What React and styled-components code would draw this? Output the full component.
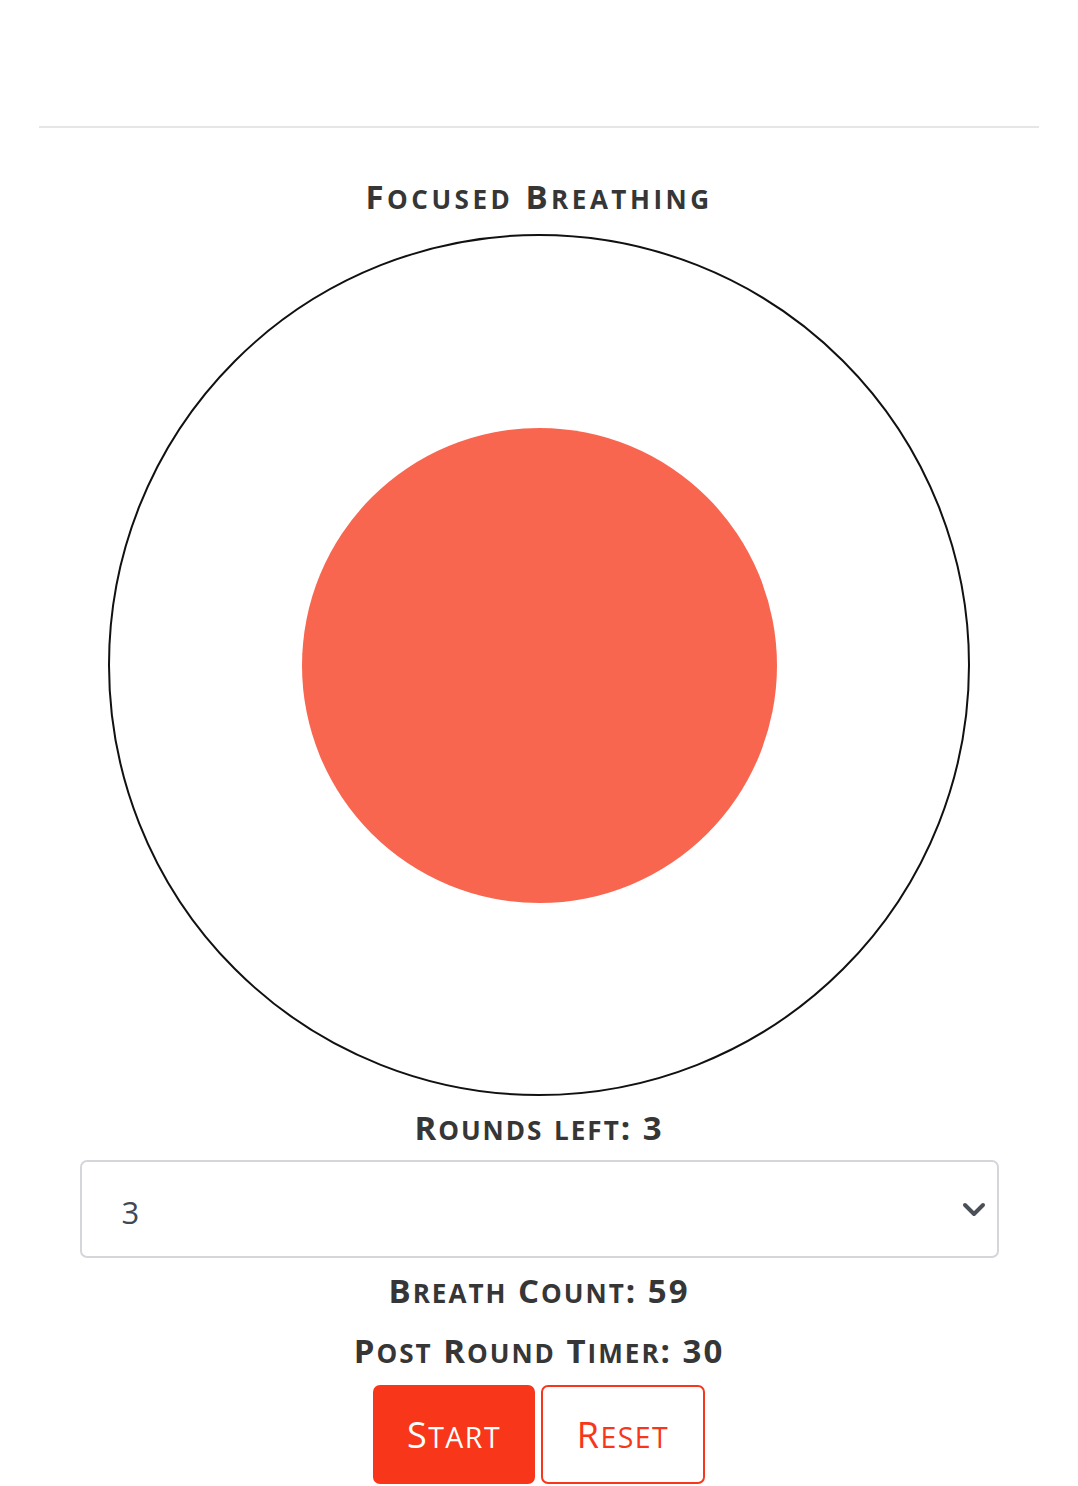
import React from 'react'
import styled, { createGlobalStyle } from 'styled-components'

const GlobalStyle = createGlobalStyle`
    html, body {
        margin: 0;
        padding: 0;
        background: #ffffff;
    }
    body {
        font-family: "Open Sans", sans-serif;
        color: #363636;
    }
`

const Page = styled.div`
    width: 1078px;
    display: flex;
    flex-direction: column;
    align-items: center;
    padding-top: 126px;
`

const Divider = styled.hr`
    width: 1000px;
    margin: 0;
    border: none;
    border-top: 2px solid #e6e6e6;
`

const Heading = styled.h2`
    margin: ${props => props.margin || '0'};
    font-family: "Open Sans", sans-serif;
    font-weight: 700;
    font-size: 33px;
    line-height: 40px;
    letter-spacing: ${props => props.spacing || '2px'};
    color: #363636;
    text-align: center;
`

// lowercase letters drawn as smaller capitals
const Small = styled.span`
    font-size: 0.79em;
    line-height: 1;
    text-transform: uppercase;
`

const smallCaps = (text) => {
    const parts = []
    let buf = ''
    let lower = false
    const flush = () => {
        if (!buf) return
        parts.push(lower ? <Small key={parts.length}>{buf}</Small> : buf)
        buf = ''
    }
    for (const ch of text) {
        const isLower = ch !== ch.toUpperCase()
        if (isLower !== lower) {
            flush()
            lower = isLower
        }
        buf += ch
    }
    flush()
    return parts
}

const OuterCircle = styled.div`
    width: 858px;
    height: 858px;
    border: 2px solid #111;
    border-radius: 50%;
    display: flex;
    align-items: center;
    justify-content: center;
`

const InnerCircle = styled.div`
    width: 475px;
    height: 475px;
    border-radius: 50%;
    background-color: #f96650;
`

const SelectWrap = styled.div`
    position: relative;
    width: 919px;
`

const SelectInput = styled.select`
    -webkit-appearance: none;
    -moz-appearance: none;
    appearance: none;
    display: block;
    width: 100%;
    height: 98px;
    border: 2px solid #d4d6db;
    border-radius: 7px;
    background-color: #fff;
    padding: 6px 0 0 40px;
    font-family: "Open Sans", sans-serif;
    font-size: 31px;
    color: #424852;
`

const Chevron = styled.svg`
    position: absolute;
    right: 13px;
    top: 42px;
    width: 24px;
    height: 15px;
    pointer-events: none;
`

const ButtonRow = styled.div`
    display: flex;
    gap: 6px;
    margin-top: 14px;
`

const Button = styled.button`
    box-sizing: border-box;
    width: ${props => props.primary ? '162px' : '164px'};
    height: 99px;
    border-radius: 7px;
    border: 2px solid #f8361a;
    background-color: ${props => props.primary ? '#f8361a' : '#ffffff'};
    color: ${props => props.primary ? '#ffffff' : '#f8361a'};
    font-family: "Open Sans", sans-serif;
    font-size: 36px;
    font-weight: 400;
    letter-spacing: 1.5px;
    cursor: pointer;
`

export default function App() {
    return (
        <>
            <GlobalStyle />
            <Page>
                <Divider />
                <Heading margin="49px 0 17px 0" spacing="3.5px">{smallCaps('Focused Breathing')}</Heading>
                <OuterCircle>
                    <InnerCircle />
                </OuterCircle>
                <Heading margin="12px 0 12px 0">{smallCaps('Rounds left: 3')}</Heading>
                <SelectWrap>
                    <SelectInput defaultValue="3">
                        <option value="1">1</option>
                        <option value="2">2</option>
                        <option value="3">3</option>
                        <option value="4">4</option>
                        <option value="5">5</option>
                    </SelectInput>
                    <Chevron viewBox="0 0 24 15">
                        <path d="M3 3 L12 12 L21 3" fill="none" stroke="#4b5058" strokeWidth="4" strokeLinecap="round" strokeLinejoin="round" />
                    </Chevron>
                </SelectWrap>
                <Heading margin="13px 0 0 0">{smallCaps('Breath Count: 59')}</Heading>
                <Heading margin="20px 0 0 0">{smallCaps('Post Round Timer: 30')}</Heading>
                <ButtonRow>
                    <Button primary>{smallCaps('Start')}</Button>
                    <Button>{smallCaps('Reset')}</Button>
                </ButtonRow>
            </Page>
        </>
    )
}
